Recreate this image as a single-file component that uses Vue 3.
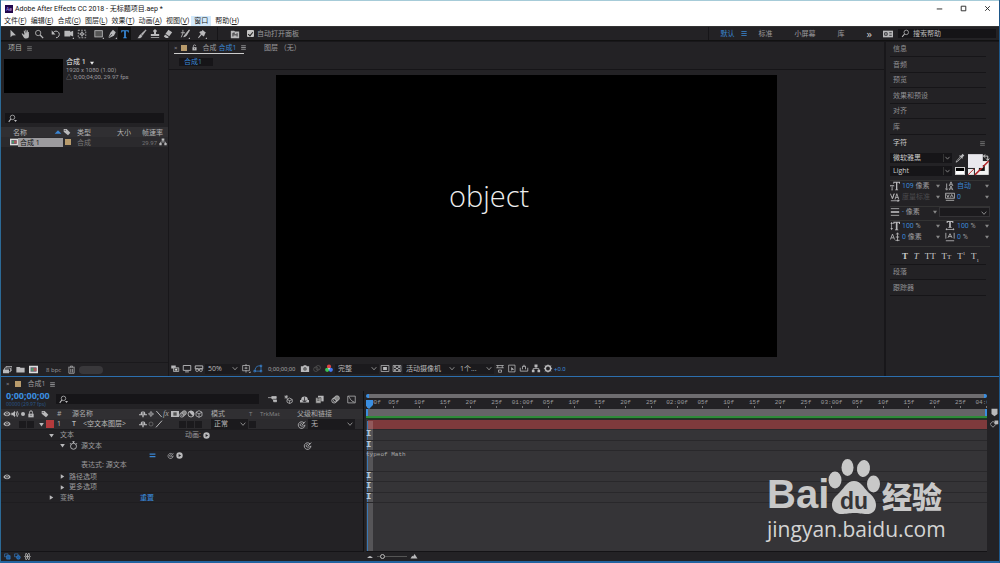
<script setup>
import { h } from 'vue'

const glyphs = {
  arrow: '<path d="M3 1v9l2.400-2.200L9.500 7.600z" fill="currentColor"/>',
  hand: '<path d="M3 6.500 1.500 5l-.8.8L3.200 10c.5 1 1.300 1.500 3 1.500 2.200 0 3.300-1 3.300-3V3.500h-1V6l-.4-4.500h-1L7 5.500 6.200.8h-1L5.500 5.500 4.200 1.700l-1 .3 1 4.500z" fill="currentColor"/>',
  search: '<circle cx="5" cy="4.800" r="3.200" fill="none" stroke="currentColor"/><path d="M7.400 7.200 11 11" stroke="currentColor" stroke-width="1.500"/>',
  find: '<circle cx="7" cy="4.500" r="3" fill="none" stroke="currentColor"/><path d="M4.800 6.700 1.500 10.500" stroke="currentColor" stroke-width="1.400"/>',
  findmenu: '<circle cx="6" cy="4.500" r="3" fill="none" stroke="currentColor"/><path d="M3.800 6.700 1 10.500" stroke="currentColor" stroke-width="1.400"/><path d="M8 8h4l-2 2.500z" fill="currentColor"/>',
  rotate: '<path d="M2.500 4.500a4 4 0 1 1 3.500 6" fill="none" stroke="currentColor" stroke-width="1.200"/><path d="M.8 1.500v5h4.500z" fill="currentColor"/>',
  camera: '<path d="M.5 2h7v1.500L11 2v7L7.500 7.500V9h-7z" fill="currentColor"/><path d="M12 12v-2l-2 2z" fill="currentColor"/>',
  pan: '<rect x="1.500" y="1.500" width="9" height="9" fill="none" stroke="currentColor" stroke-dasharray="2 1.500"/><circle cx="6" cy="6" r="1.800" fill="none" stroke="currentColor"/><path d="M6 2v8M2 6h8" stroke="currentColor" stroke-width=".7"/>',
  rect: '<rect x="1" y="2" width="9" height="7.500" fill="#555" stroke="currentColor"/><path d="M12 12v-2l-2 2z" fill="currentColor"/>',
  pen: '<path d="M7.200.8 10.500 4 8.300 8 2.500 10.800 1.800 10 4 4.500z" fill="currentColor"/><path d="M2 10.500 6 6" stroke="#232225" stroke-width=".8"/><path d="M12 12v-2l-2 2z" fill="currentColor"/>',
  type: '<path d="M1.500 1.500h9v2.700h-.8L9 2.800H7v7l1.200.4v.8H3.800v-.8L5 9.800v-7H3l-.7 1.400h-.8z" fill="currentColor"/>',
  brush: '<path d="M10.500 1 11 1.500 6.500 7.500 5 6zM4.500 6.500 6 8c0 2-2 3-5 2.800C3 10 2.500 7 4.500 6.500z" fill="currentColor" stroke="currentColor" stroke-width=".6"/>',
  stamp: '<path d="M4.800 6V4a2 2 0 1 1 2.400 0v2H11v2.500H1V6zM1 9.500h10v1H1z" fill="currentColor"/>',
  eraser: '<path d="M6.500 1 11 4 7.500 8.800 3 5.800zM2.500 6.500 7 9.500l-1 1.300H3.500L1 9z" fill="currentColor"/>',
  roto: '<path d="m11 1-5 6-1.500 2.500L7.500 8 11.500 1.500zM3.500 1v4M1 4.500h5M3.500 5 1.500 10" stroke="currentColor" fill="currentColor"/><path d="M12 12v-2l-2 2z" fill="currentColor"/>',
  pin: '<path d="m6.500.8 4.500 4-1.200.4-1 3L7.500 9 5.800 7 2 11l-.7-.7L4.500 6 2.800 4.300l.8-1.200 2.500-.8z" fill="currentColor"/><path d="M12 12v-2l-2 2z" fill="currentColor"/>',
  panel: '<path d="M1 2h4l1 1h5v8H1z" fill="currentColor"/><path d="M3.500 5v4M8.500 5v4M3.500 5H6M4 7h4" stroke="#232225"/>',
  menu: '<path d="M2 3h8M2 6h8M2 9h8" stroke="currentColor" stroke-width="1.200"/>',
  cc: '<path d="M0 2h12v8H0z" fill="currentColor"/><path d="M2 4.500h3v3H2zM7.500 4.500h3M7.500 7.500h3" stroke="#232225" fill="none"/>',
  lockopen: '<path d="M2.500 5.500h7V11h-7z" fill="currentColor"/><path d="M4 5.500V3.500a2 2 0 0 1 4 0" stroke="currentColor" stroke-width="1.300" fill="none"/><path d="M6 7v2" stroke="#232225"/>',
  lock: '<path d="M2 5.500h8V11H2z" fill="currentColor"/><path d="M3.800 5.500V3.500a2.200 2.200 0 0 1 4.400 0v2" stroke="currentColor" stroke-width="1.500" fill="none"/><path d="M6 7v2" stroke="#232225"/>',
  down: '<path d="M2 3.500h8l-4 6z" fill="currentColor"/>',
  up: '<path d="M1 8.500h10l-5-5z" fill="currentColor"/>',
  right: '<path d="M3 2v8l6-4z" fill="currentColor"/>',
  chev: '<path d="m2.500 4 3.500 4L9.500 4" fill="none" stroke="currentColor" stroke-width="1.300"/>',
  tag: '<path d="M1 1.500h4.500L11 7 7.500 11 1 5.500z" fill="currentColor"/><circle cx="3.200" cy="3.400" r=".9" fill="#232225"/>',
  comp: '<path d="M0 1h12v10H0z" fill="#ddd"/><path d="M2 3h8v6H2z" fill="#667"/><circle cx="5" cy="6" r="2" fill="#48a06a"/><path d="M6 4h4v4H6z" fill="#a8585c"/>',
  net: '<path d="M4 .8h4v3.500H4zM.5 7.500H4V11H.5zM8 7.500h3.500V11H8z" fill="currentColor"/><path d="M6 4v2M2.300 8V6h7.400v2" stroke="currentColor" fill="none"/>',
  footage: '<path d="M4 2h8v5H4z" fill="none" stroke="currentColor"/><path d="M2 4h8v5H2z" fill="#232225" stroke="currentColor"/><path d="M0 6h8v5H0z" fill="currentColor"/>',
  folder: '<path d="M.5 2.500H5l1 1.200h5.500V10H.5z" fill="currentColor"/>',
  trash: '<path d="M1.500 3h9M4.500 3V1.500h3V3M2.500 4v7h7V4M5 5v5M7.200 5v5" fill="none" stroke="currentColor"/>',
  stack: '<path d="M1 2h6v4H1z" fill="currentColor"/><path d="M4 5h7v5H4z" fill="#555" stroke="currentColor"/><circle cx="7.500" cy="7.500" r="1.300" fill="#ddd"/>',
  monitor: '<path d="M1 2h10v6.500H1zM3.500 10.500h5" fill="none" stroke="currentColor" stroke-width="1.200"/>',
  goggles: '<path d="M1 2.500h10v4H1z" fill="none" stroke="currentColor" stroke-width="1.300"/><circle cx="3.500" cy="8" r="2" fill="none" stroke="currentColor"/><circle cx="8.500" cy="8" r="2" fill="none" stroke="currentColor"/>',
  grid: '<path d="M1.500 2h9v7h-9zM6 0v3M6 8v3.500M4 5.500h4M6 4v3" fill="none" stroke="currentColor"/><path d="M12 12V9.500L9.500 12z" fill="currentColor"/>',
  mask: '<path d="M2 9.500c0-4 1.500-6.500 5-7h3v7zM.5 8.500h2v2h-2zM9 1.500h2v2H9zM9 8.500h2v2H9z" fill="none" stroke="currentColor"/>',
  photo: '<path d="M.5 3h3l1-1.500h3l1 1.500h3v7.500H.5z" fill="currentColor"/><circle cx="6" cy="6.500" r="2.200" fill="#333"/><circle cx="6" cy="6.500" r="1" fill="currentColor"/>',
  ghost: '<circle cx="4.500" cy="7" r="3" fill="none" stroke="currentColor"/><circle cx="7.500" cy="5" r="3" fill="none" stroke="currentColor"/>',
  rgb: '<circle cx="6" cy="3.500" r="2.800" fill="#e04444"/><circle cx="3.600" cy="7.800" r="2.800" fill="#3cc455"/><circle cx="8.400" cy="7.800" r="2.800" fill="#4478f0"/><circle cx="6" cy="6.200" r="1" fill="#fff"/>',
  roi: '<path d="M.8 2h10.400v8H.8z" fill="none" stroke="currentColor"/><path d="M3.500 4h5v4h-5z" fill="currentColor"/>',
  checker: '<path d="M.8 2h10.400v8H.8z" fill="none" stroke="currentColor"/><path d="M2 3h2.500v2H2zM7.500 3H10v2H7.500zM4.500 5h3v2h-3zM2 7h2.500v2H2zM7.500 7H10v2H7.500z" fill="currentColor"/>',
  pixel: '<path d="M1 2h10M1 5h10M3 2v3M9 2v3M4 8h4v3H4z" fill="none" stroke="currentColor"/>',
  fast: '<path d="M1.500 1.500h8.500v9H1.500z" fill="none" stroke="currentColor"/><path d="M5 4v5l1.500-1.500L9 7.500z" fill="currentColor"/>',
  share: '<path d="M1 5v4.500h10V5M4 7V3h4v4M6 1v3" fill="none" stroke="currentColor" stroke-width="1.100"/>',
  gear: '<circle cx="6" cy="6" r="3.600" fill="none" stroke="currentColor" stroke-width="2"/><path d="M6 .5v2M6 9.500v2M.5 6h2M9.500 6h2M2 2l1.500 1.500M8.500 8.500 10 10M10 2 8.500 3.500M3.500 8.500 2 10" stroke="currentColor"/>',
  eye: '<path d="M.5 6c3-5 8-5 11 0-3 4.500-8 4.500-11 0z" fill="currentColor"/><circle cx="6" cy="5.800" r="2.600" fill="#232225"/><circle cx="6" cy="5.800" r="1.200" fill="currentColor"/>',
  audio: '<path d="M.5 4H3l3-3v10L3 8H.5z" fill="currentColor"/><path d="M7.500 3q2 3 0 6M9 1.500q4 4.500 0 9" fill="none" stroke="currentColor" stroke-width="1.300"/>',
  dot: '<circle cx="6" cy="6" r="3" fill="currentColor"/>',
  shy: '<path d="M2.500 6a3.500 4 0 0 1 7 0v1h-7zM0 6.500h12v1.500H0zM5 8h2v3H5z" fill="currentColor"/><path d="M6 2v5" stroke="#232225"/>',
  star: '<path d="M6 2v8M2 6h8" stroke="currentColor"/><path d="m6 2.500 3.500 3.500L6 9.500 2.500 6z" fill="none" stroke="currentColor"/>',
  stardim: '<circle cx="6" cy="6" r="3" fill="none" stroke="#777"/>',
  back: '<path d="m2 1.500 8 9" stroke="currentColor" stroke-width="1.500"/>',
  slash: '<path d="M10.500 1 1.500 11" stroke="currentColor" stroke-width="1.500"/>',
  film: '<path d="M0 1.500h12v9H0z" fill="currentColor"/><path d="M3.500 3.500h5v5h-5z" fill="#555"/>',
  blur: '<circle cx="4.200" cy="7.500" r="3.200" fill="none" stroke="currentColor" stroke-width="1.200"/><circle cx="6" cy="6" r="3.200" fill="none" stroke="currentColor"/><circle cx="8" cy="4.200" r="3.200" fill="#888" stroke="currentColor"/>',
  adjust: '<circle cx="6" cy="6" r="4.500" fill="none" stroke="currentColor" stroke-width="1.300"/><path d="M2.800 2.800a4.500 4.500 0 1 1 6.400 6.400z" fill="currentColor"/>',
  cube: '<path d="m6 1 4.500 2.300v5.400L6 11 1.500 8.700V3.300zM1.500 3.300 6 5.800l4.500-2.500M6 5.800V11" fill="none" stroke="currentColor" stroke-width="1.200"/>',
  whip: '<path d="M9.500 4A4.400 4.400 0 1 0 10.500 6.500C10 8.500 4 9 4.200 6.300 4.500 4 8 4.500 7.300 6.300L11 2" fill="none" stroke="currentColor" stroke-width="1.100"/>',
  play: '<circle cx="6" cy="6" r="5.500" fill="currentColor"/><path d="M4.500 3.500v5L8.800 6z" fill="#232225"/>',
  watch: '<circle cx="6" cy="7" r="4" fill="none" stroke="currentColor" stroke-width="1.200"/><path d="M4.500 1h3M6 1v2M1.500 3 3 4.500M10.500 3 9 4.500" stroke="currentColor" stroke-width="1.300"/>',
  equal: '<path d="M1 3.500h10M1 8h10" stroke="currentColor" stroke-width="2"/>',
  flow: '<path d="M0 3.500h5M5 2h6v2.500H5zM5 3.500 8 8M7.500 6.500h4V9h-4z" fill="currentColor" stroke="currentColor"/>',
  draft: '<path d="M3 0v5M.5 2.500h5M1 1l4 3.500M5 1 1 4.500" stroke="currentColor"/><path d="m7.500 4 3.500 2v3.500l-3.500 2-3.500-2V6zM4 6l3.500 1.500L11 6M7.500 7.500v4" fill="none" stroke="currentColor"/>',
  shytop: '<path d="M1.500 6.500a4.500 4.500 0 0 1 9 0H12V10H0V6.500z" fill="currentColor"/><path d="M4 6.500v2h4v-2M6 3v6" stroke="#232225" fill="none"/>',
  blend: '<path d="M4 1h7.500v7.500H4z" fill="currentColor"/><path d="M1 3.500h7V11H1z" fill="#aaa" stroke="#232225" stroke-width=".7"/><path d="M3 5h3M3 7h3" stroke="#333"/>',
  graph: '<path d="M1 1.500h10v9H1z" fill="none" stroke="currentColor"/><path d="M2 2c2 1 2 6 8 7.500" fill="none" stroke="currentColor"/>',
  marker: '<path d="M2 1h8v7l-4 3-4-3z" fill="currentColor"/>',
  keys: '<path d="m4 3 4 4-4 4-4-4z" fill="none" stroke="currentColor"/><path d="M6 2h5v5H6z" fill="currentColor"/>',
  small: '<path d="M1 8.500 4 6l2-1 2 1 3 2.500z" fill="currentColor"/>',
  large: '<path d="m0 9.500 3-5L4.500 6 7 1.500l5 8z" fill="currentColor"/>',
  toggle: '<path d="M1 1.500h6v5H1z" fill="none" stroke="currentColor"/><path d="M4.500 4.500h6v6h-6z" fill="#1f5d9e" stroke="currentColor"/>',
  toggleround: '<path d="M1 1.500h6v5H1z" fill="none" stroke="currentColor"/><circle cx="7.500" cy="7.500" r="3.200" fill="#1f5d9e" stroke="currentColor"/>',
  braces: '<path d="M5 1H3v4L1 6l2 1v4h2M7 1h2v4l2 1-2 1v4H7M6 2v8M3.500 6h5" fill="none" stroke="currentColor" stroke-width="1.500"/>',
  dropper: '<path d="m7 3.500 2-2.500 2.200 2L9 5.200l.5.8-1 1L5 3.500l1-1z" fill="currentColor"/><path d="M6 5 2 9.500l-.7 1.500L3 10.200 7.200 6.200" fill="none" stroke="currentColor"/>',
  size: '<path d="M4 1h8v2.200h-.8L10.800 2H8.800v8l1 .5v.5H6.200v-.5l1-.5V2h-2l-.4 1.200H4zM0 5h5v1.500h-.6L4 6H3v4.500h.5v.5h-2v-.5H2V6H1l-.4.5H0z" fill="currentColor"/>',
  lead: '<path d="m5 6 2.200-5L9.500 6M6 4.500h2.500M5 11l2.200-5L9.500 11M6 9.500h2.500M2 3v7M.5 9 2 11 3.500 9" fill="none" stroke="currentColor"/>',
  kern: '<path d="m.5 2 2.300 6L5 2 3 8M6 9l2.200-7L10.500 9M7 6.500h3M1 10.500h9" fill="none" stroke="currentColor"/><path d="M9 9l3 1.500L9 12z" fill="currentColor"/>',
  track: '<path d="M.5 1.500h11v6H.5zM2 3l1.500 3.500L5 3M6.500 6.500 8 3l2 3.500M1 10h10" fill="none" stroke="currentColor"/>',
  lines: '<path d="M1 2h10M1 10h10" stroke="currentColor"/><path d="M1 6h10" stroke="currentColor" stroke-width="2"/>',
  vscale: '<path d="M4 1h8v2.500h-1L10.500 2.200H9V10l1 .5v.5H6v-.5l1-.5V2.200H5.500L5 3.500H4zM2 1l1.500 2.500H.5zM2 11 .5 8.500h3zM1.600 3h.8v6h-.8z" fill="currentColor"/>',
  hscale: '<path d="M2 0h8v2.500H9L8.500 1.300H7V7l1 .5V8H4v-.5L5 7V1.300H3.500L3 2.500H2zM.5 10l2-1.500v1h7v-1l2 1.500-2 1.500v-1h-7v1z" fill="currentColor"/>',
  base: '<path d="M.5 9 3 2.500 5.500 9M1.500 7h3M9 1v10M7.500 3 9 1l1.500 2M6.500 10h5M7 6h4" fill="none" stroke="currentColor"/>',
  tsume: '<path d="m3.500 7 2.500-5L8.500 7M4.500 5.500h3M1 1v7M11 1v7M1 10.500h10" fill="none" stroke="currentColor"/>'
}
const Ico = ({ name }) => h('svg', { viewBox: '0 0 12 12', class: 'ico', 'aria-hidden': 'true', innerHTML: glyphs[name] })
Ico.props = ['name']

const menus = [['文件', 'F'], ['编辑', 'E'], ['合成', 'C'], ['图层', 'L'], ['效果', 'T'], ['动画', 'A'], ['视图', 'V'], ['窗口', ''], ['帮助', 'H']]
const tools = [['arrow', 'hand', 'search'], ['rotate', 'camera', 'pan'], ['rect', 'pen', 'type'], ['brush', 'stamp', 'eraser'], ['roto'], ['pin']]
const closed = ['信息', '音频', '预览', '效果和预设', '对齐', '库']
const ticks = ['00f']
for (let i = 1; i < 25; i++) ticks.push(i % 6 ? String((i % 6) * 5).padStart(2, '0') + 'f' : '0' + i / 6 + ':00f')
const switches = ['shy', 'star', 'back', 'fx', 'film', 'blur', 'adjust', 'cube']
</script>

<template>
  <div class="app">
    <header class="title">
      <span class="logo">Ae</span>
      <span class="name">Adobe After Effects CC 2018 - 无标题项目.aep *</span>
      <button class="win" aria-label="最小化"><svg viewBox="0 0 12 12"><path d="M3 6.500h6" stroke="#222" /></svg></button>
      <button class="win" aria-label="最大化"><svg viewBox="0 0 12 12"><path d="M3.500 3.500h5v5h-5z" fill="none" stroke="#222" /></svg></button>
      <button class="win" aria-label="关闭"><svg viewBox="0 0 12 12"><path d="m3.500 3.500 5 5m0-5-5 5" stroke="#222" /></svg></button>
    </header>
    <nav class="menus">
      <button v-for="m in menus" :key="m[0]" :class="{ hot: !m[1] }">{{ m[0] }}<template v-if="m[1]">(<u>{{ m[1] }}</u>)</template></button>
    </nav>

    <div class="toolbar">
      <div v-for="(g, i) in tools" :key="i" class="tools">
        <button v-for="t in g" :key="t" :class="{ on: t === 'type' }" :aria-label="t"><Ico :name="t" /></button>
      </div>
      <span class="rule"></span>
      <Ico name="panel" class="mid" />
      <label class="auto"><input type="checkbox" checked />自动打开面板</label>
      <span class="grow"></span>
      <div class="spaces">
        <button class="on">默认<Ico name="menu" /></button>
        <button>标准</button>
        <button class="wide">小屏幕</button>
        <button>库</button>
        <button class="more">»</button>
      </div>
      <Ico name="cc" class="mid" />
      <label class="help"><Ico name="find" /><input type="text" placeholder="搜索帮助" aria-label="搜索帮助" /></label>
    </div>

    <main class="main">
      <section class="project">
        <h2>项目<Ico name="menu" /></h2>
        <div class="info">
          <div class="thumb"></div>
          <div>
            <b>合成 1 <Ico name="down" /></b>
            <p>1920 x 1080 (1.00)</p>
            <p>△ 0;00;04;00, 29.97 fps</p>
          </div>
        </div>
        <label class="find pfind"><Ico name="findmenu" /><input type="text" aria-label="搜索项目" /></label>
        <table>
          <thead>
            <tr><th class="c1"><span>名称<Ico name="up" /></span></th><th class="c2"><Ico name="tag" /></th><th class="c3">类型</th><th class="c4">大小</th><th>帧速率</th></tr>
          </thead>
          <tbody>
            <tr><td><span class="item"><Ico name="comp" /><i>合成 1</i></span></td><td><span class="chip"></span></td><td>合成</td><td></td><td><span class="rate">29.97<Ico name="net" /></span></td></tr>
          </tbody>
        </table>
        <footer>
          <Ico name="footage" /><Ico name="folder" /><Ico name="comp" />
          <button>8 bpc</button><Ico name="trash" /><span class="pill"></span>
        </footer>
      </section>

      <section class="viewer">
        <div class="tabs">
          <button class="tab on"><em>×</em><span class="chip"></span><Ico name="lockopen" />合成 <strong>合成1</strong><Ico name="menu" /></button>
          <button class="tab">图层 （无）</button>
        </div>
        <div class="crumb"><button>合成1</button></div>
        <div class="stage"><div class="canvas"><span>object</span></div></div>
        <footer>
          <Ico name="stack" /><Ico name="monitor" /><Ico name="goggles" />
          <span class="sel s1"><select aria-label="放大率"><option>50%</option></select><Ico name="chev" /></span>
          <Ico name="grid" /><Ico name="mask" class="blue" />
          <button class="time">0;00;00;00</button>
          <Ico name="photo" /><Ico name="ghost" class="dim" /><Ico name="rgb" />
          <span class="sel s2"><select aria-label="分辨率"><option>完整</option></select><Ico name="chev" /></span>
          <Ico name="roi" /><Ico name="checker" />
          <span class="sel s3"><select aria-label="视图"><option>活动摄像机</option></select><Ico name="chev" /></span>
          <span class="sel s4"><select aria-label="视图布局"><option>1个...</option></select><Ico name="chev" /></span>
          <Ico name="pixel" /><Ico name="fast" /><Ico name="share" /><Ico name="net" /><Ico name="gear" />
          <button class="blue expo">+0.0</button>
        </footer>
      </section>

      <aside class="side">
        <button v-for="p in closed" :key="p" class="fold">{{ p }}</button>
        <h2>字符<Ico name="menu" /></h2>
        <div class="fonts">
          <div class="faces">
            <span class="sel"><select aria-label="字体"><option>微软雅黑</option></select><Ico name="chev" /></span>
            <span class="sel"><select aria-label="字体样式"><option>Light</option></select><Ico name="chev" /></span>
          </div>
          <div class="pick"><Ico name="dropper" /><span class="bw"></span></div>
          <svg class="swatch" viewBox="0 0 22 24">
            <path d="M7 8h14v14H7z" fill="#f2f2f2" /><path d="M11 12h6v6h-6z" fill="#111" /><path d="m7 22 14-14" stroke="#b3282d" stroke-width="1.500" />
            <path d="M0 1h15v14H0z" fill="#e9e8ed" /><path d="M0 16h6v6H0z" fill="#eee" /><path d="m0 22 6-6" stroke="#b3282d" />
            <path d="M16 3h4v4M18.500 5.500 20 7.500l1.500-2M17.500 1.500 15.500 3l2 1.500" fill="none" stroke="#ccc" />
          </svg>
        </div>
        <div class="nums">
          <Ico name="size" /><p><button>109</button> 像素</p><Ico name="down" class="dd" /><Ico name="lead" /><p><button>自动</button></p><Ico name="down" class="dd" />
          <Ico name="kern" /><p class="off">度量标准</p><Ico name="down" class="dd" /><Ico name="track" /><p><button>0</button></p><Ico name="down" class="dd" />
        </div>
        <div class="nums one">
          <Ico name="lines" /><p><button>-</button> 像素</p><Ico name="down" class="dd" />
          <span class="sel box"><select aria-label="描边顺序"><option></option></select><Ico name="chev" /></span>
        </div>
        <div class="nums">
          <Ico name="vscale" /><p><button>100</button> %</p><Ico name="down" class="dd" /><Ico name="hscale" /><p><button>100</button> %</p><Ico name="down" class="dd" />
          <Ico name="base" /><p><button>0</button> 像素</p><Ico name="down" class="dd" /><Ico name="tsume" /><p><button>0</button> %</p><Ico name="down" class="dd" />
        </div>
        <div class="styles">
          <button><b>T</b></button><button><i>T</i></button><button>TT</button><button>T<small>T</small></button><button>T<sup>1</sup></button><button>T<sub>1</sub></button>
        </div>
        <button class="fold">段落</button>
        <button class="fold">跟踪器</button>
      </aside>
    </main>

    <section class="timeline">
      <div class="ttab"><em>×</em><span class="chip"></span>合成1<Ico name="menu" /></div>
      <div class="left">
        <div class="ctrl">
          <div class="clock"><button>0;00;00;00</button><small>00000 (29.97 fps)</small></div>
          <label class="find"><Ico name="findmenu" /><input type="text" aria-label="搜索图层" /></label>
          <div class="modes"><Ico name="flow" /><Ico name="draft" /><Ico name="shytop" /><Ico name="blend" /><Ico name="blur" /><Ico name="graph" /></div>
        </div>
        <div class="row head">
          <Ico name="eye" /><Ico name="audio" /><Ico name="dot" /><Ico name="lock" />
          <Ico name="tag" class="ctr" /><span class="num">#</span><span>源名称</span>
          <span class="sw"><template v-for="s in switches" :key="s"><i v-if="s === 'fx'">fx</i><Ico v-else :name="s" /></template></span>
          <span class="md">模式</span><span class="trk">T</span><span class="trk">TrkMat</span><span>父级和链接</span>
        </div>
        <div class="row layer">
          <Ico name="eye" /><span></span><i class="cell"></i><i class="cell"></i>
          <span class="lab"><Ico name="down" /><i class="red"></i></span><span class="num">1</span>
          <span class="lname"><b>T</b>&lt;空文本图层&gt;</span>
          <span class="sw"><Ico name="shy" /><Ico name="stardim" /><Ico name="slash" /><i></i><i></i><i class="cell"></i><i class="cell"></i><i class="cell"></i></span>
          <span class="sel md"><select aria-label="模式"><option>正常</option></select><Ico name="chev" /></span>
          <i class="cell"></i><span></span>
          <span class="parent"><Ico name="whip" /><span class="sel"><select aria-label="父级"><option>无</option></select><Ico name="chev" /></span></span>
        </div>
        <div class="prop p1"><span class="pn"><Ico name="down" />文本</span><span class="anim">动画: <Ico name="play" /></span></div>
        <div class="prop p2"><span class="pn"><Ico name="down" /><Ico name="watch" class="w" />源文本</span><Ico name="whip" class="pw" /></div>
        <div class="prop expr"><span class="ops"><Ico name="equal" class="blue" /><Ico name="whip" /><Ico name="play" /></span><span class="et">表达式: 源文本</span></div>
        <div class="prop p2"><Ico name="eye" class="ev" /><span class="pn"><Ico name="right" />路径选项</span></div>
        <div class="prop p2"><span class="pn"><Ico name="right" />更多选项</span></div>
        <div class="prop p1"><span class="pn"><Ico name="right" />变换</span><button class="reset">重置</button></div>
      </div>
      <div class="tracks">
        <div class="nav"></div>
        <div class="ruler"><span v-for="(t, i) in ticks" :key="i">{{ t }}</span></div>
        <div class="work"></div>
        <div class="cache"></div>
        <div class="bar"></div>
        <div class="lane"><b>I</b></div>
        <div class="lane"><b>I</b></div>
        <div class="lane tall"><code>typeof Math</code></div>
        <div class="lane"><b>I</b></div>
        <div class="lane"><b>I</b></div>
        <div class="lane"><b>I</b></div>
        <div class="playhead"><svg viewBox="0 0 8 10"><path d="M0 0h8v5L4 9 0 5z" fill="#3a8ee0" /></svg></div>
      </div>
      <div class="edge"><Ico name="marker" /><Ico name="keys" /></div>
      <div class="tfoot blue"><Ico name="toggle" /><Ico name="toggleround" /><Ico name="braces" class="lit" /></div>
      <div class="zoom"><Ico name="small" /><input type="range" min="0" max="100" value="12" aria-label="缩放时间" /><Ico name="large" /></div>
    </section>

    <div class="mark">
      <div class="brand">
        <span>Bai</span>
        <svg viewBox="0 0 54 58">
          <g fill="#c8c8c8"><ellipse cx="8" cy="22" rx="6.500" ry="8.500" /><ellipse cx="20.500" cy="9.500" rx="6" ry="8.500" /><ellipse cx="36.500" cy="10.500" rx="6.500" ry="8.500" transform="rotate(8 36.500 10.500)" /><ellipse cx="46.500" cy="26" rx="6.500" ry="8.500" />
            <path d="M27 23c7 0 9 6 14 11 5 4 8 8 8 13 0 6-4 9-9 9-6 0-8-1-13-1s-7 1-13 1c-5 0-9-4-9-9 0-6 4-9 8-13 5-5 7-11 14-11z" /></g>
          <text x="27" y="51" text-anchor="middle" class="du">du</text>
        </svg>
        <span class="cn">经验</span>
      </div>
      <div class="url">jingyan.baidu.com</div>
    </div>
  </div>
</template>

<style>
body { background: #232225; }
</style>

<style scoped>
* { box-sizing: border-box; margin: 0; }
.app { position: relative; display: grid; grid-template-rows: 16px 10px 15px 1fr minmax(187px, auto); min-height: 100vh; overflow: hidden; background: #18171a; color: #9c9b9e; font: 7px/10px "Open Sans", "Noto Sans CJK SC", sans-serif; border-left: 1px solid #2c6a96; border-right: 1px solid #1d5688; }
button, input, select { font: inherit; color: inherit; background: none; border: 0; padding: 0; min-width: 0; white-space: nowrap; outline: 0; }
button { text-align: left; }
.ico { width: 9px; height: 9px; flex: none; color: #b9b9bb; }
.blue, .blue .ico, .ico.blue { color: #3a86d4; }
em { font-style: normal; font-size: 6px; }
.chip { display: inline-block; width: 6px; height: 6px; background: #b89b6c; flex: none; }
h2 { font-size: 7px; font-weight: 400; display: flex; align-items: center; color: #aaa; }

.title { display: flex; align-items: center; background: #fff; color: #111; border-top: 1px solid #a6cbd8; padding-left: 4px; font-family: Roboto, "Noto Sans CJK SC", sans-serif; }
.logo { width: 8px; height: 8px; background: #21074c; color: #b49be8; font-size: 5px; line-height: 8px; text-align: center; margin-right: 2px; }
.name { flex: 1; }
.win { width: 24px; height: 14px; display: grid; place-items: center; }
.win svg { width: 11px; height: 11px; }
.menus { display: flex; background: #fff; color: #222; padding-left: 1px; gap: 2px; font-family: Roboto, "Noto Sans CJK SC", sans-serif; }
.menus button { padding: 0 0 0 2px; line-height: 9px; height: 10px; }
.menus .hot { background: #d3e9fb; padding: 0 3px; }
.menus u { text-underline-offset: 1px; }

.toolbar { display: flex; align-items: center; background: #232225; padding-left: 5px; gap: 4px; border-bottom: 1px solid #111; border-top: 1px solid #333; }
.tools { display: flex; }
.tools button { width: 13px; height: 13px; display: grid; place-items: center; }
.tools .ico { width: 10px; height: 10px; }
.tools .on { background: #111; }
.tools .on .ico { color: #3a8ee0; }
.rule { width: 1px; align-self: stretch; background: #161518; margin: 0 4px 0 5px; }
.mid { width: 10px; height: 10px; }
.toolbar > .rule + .mid { margin-left: 4px; }
.auto { display: flex; align-items: center; gap: 3px; margin-left: 3px; }
.auto input { appearance: none; width: 7px; height: 7px; background: #c4c4c4; border-radius: 1px; display: grid; place-items: center; }
.auto input::after { content: ""; width: 2px; height: 4px; border: solid #222; border-width: 0 1px 1px 0; transform: rotate(40deg); }
.grow { flex: 1; }
.spaces { display: flex; align-items: center; border-left: 1px solid #161518; padding-left: 12px; gap: 22px; align-self: stretch; margin-right: 5px; }
.spaces .on { color: #3a86d4; display: flex; align-items: center; gap: 5px; margin-right: -11px; }
.spaces .on .ico { color: #3a86d4; width: 8px; }
.spaces .more { font-size: 11px; color: #ccc; margin-right: 2px; }
.help { width: 98px; height: 9px; background: #151417; margin: 0 3px 0 1px; display: flex; align-items: center; gap: 3px; padding-left: 3px; color: #ccc; }
.help input { width: 76px; height: 9px; }
input::placeholder { color: #bbb; }

.main { display: grid; grid-template-columns: 167px 1fr 114px; column-gap: 1px; padding-top: 1px; min-height: 0; }
.project, .viewer, .side { background: #232225; display: flex; flex-direction: column; min-width: 0; }
.project h2 { padding: 0 7px 2px; gap: 4px; height: 14px; }
h2 .ico { width: 7px; height: 7px; color: #888; }
.info { display: flex; gap: 3px; padding: 3px 3px 0; height: 57px; font: 6px/7px Roboto, "Noto Sans CJK SC", "DejaVu Sans", sans-serif; }
.thumb { width: 59px; height: 34px; background: #000; }
.info b { font-size: 7px; font-weight: 500; color: #ccc; display: flex; align-items: center; gap: 3px; }
.info b .ico { width: 6px; height: 6px; color: #eee; }
.find { background: #161518; display: flex; align-items: center; height: 10px; padding-left: 3px; }
.find input { flex: 1; height: 9px; }
.pfind { margin: 0 4px 4px; flex: none; }
table { border-collapse: collapse; width: 100%; table-layout: fixed; font-size: 7px; line-height: 9px; }
th { background: #302f32; font-weight: 400; color: #b5b5b5; text-align: left; padding: 0; height: 10px; }
td { padding: 0; height: 10px; background: #2b2a2d; color: #777; }
.c1 { width: 62px; } .c2 { width: 14px; } .c3 { width: 40px; } .c4 { width: 25px; }
th span { display: flex; justify-content: space-between; padding: 0 1px 0 12px; align-items: center; }
th .ico { width: 8px; height: 8px; display: block; }
th span .ico { color: #3a86d4; }
.item { display: flex; align-items: center; padding-left: 9px; }
.item i { flex: 1; background: #9c9b9e; color: #111; font-style: normal; padding-left: 2px; }
td .chip { display: block; margin-left: 2px; }
.rate { display: flex; gap: 2px; align-items: center; font: 6px/9px Roboto, sans-serif; }
td .ico { width: 8px; height: 8px; }
.project footer { margin-top: auto; height: 14px; display: flex; align-items: center; gap: 4px; padding-left: 2px; border-top: 1px solid #1a191c; font-size: 6px; }
.project footer button { width: 21px; padding-left: 4px; }
.pill { width: 24px; height: 8px; border-radius: 4px; background: #39383b; margin-left: -1px; }

.tabs { display: flex; gap: 20px; padding-left: 5px; height: 12px; }
.tab { display: flex; align-items: center; gap: 3px; }
.tab.on { border-bottom: 1px solid #ccc; width: 70px; gap: 4px; }
.tab .ico { width: 7px; height: 7px; }
.tab strong { font-weight: 400; color: #3a86d4; margin-left: -2px; }
.crumb { height: 16px; border-bottom: 1px solid #161518; padding: 4px 0 0 10px; }
.crumb button { display: block; background: #161518; color: #3a86d4; width: 34px; height: 8px; line-height: 8px; padding-left: 5px; }
.stage { flex: 1; display: grid; justify-items: center; align-content: start; padding-top: 5px; }
.canvas { position: relative; width: 70%; aspect-ratio: 16 / 9; background: #000; color: #eee; }
.canvas span { position: absolute; left: 34.5%; top: 36%; font: 300 29px/40px "Open Sans", "Noto Sans", sans-serif; }
.viewer footer { height: 15px; display: flex; align-items: center; }
.viewer footer .ico { width: 12px; height: 9px; }
.viewer footer .dim { color: #555; }
.sel { display: grid; align-items: center; background: #1b1a1d; height: 10px; color: #bbb; }
.sel > * { grid-area: 1 / 1; }
.sel select { appearance: none; width: 100%; height: 10px; line-height: 10px; padding: 0 10px 0 3px; }
.sel .ico { justify-self: end; pointer-events: none; width: 8px; height: 8px; color: #999; margin-right: 1px; }
.viewer footer .sel .ico { width: 8px; }
.s1 { width: 35px; } .s2 { width: 44px; } .s3 { width: 54px; } .s4 { width: 37px; }
.time { width: 35px; padding-left: 4px; font: 6px/10px Roboto, sans-serif; }
.expo { font: 6px/10px Roboto, sans-serif; }

.side { padding: 0 13px 0 4px; margin-left: 1px; }
.fold { height: 15px; border-bottom: 1px solid #161518; padding-left: 3px; color: #909093; }
.fold:nth-child(even) { height: 16px; }
.side h2 { height: 16px; padding: 0 0 0 3px; justify-content: space-between; color: #ccc; }
.fonts { display: flex; gap: 3px; height: 30px; padding-top: 2px; margin-right: -4px; border-bottom: 1px solid #333; }
.faces { width: 63px; display: grid; gap: 3px; align-content: start; }
.faces .sel { background: #161518; color: #ccc; }
.faces .sel .ico { border-left: 1px solid #333; }
.pick { width: 10px; display: grid; gap: 4px; align-content: start; }
.pick .ico { width: 10px; height: 10px; }
.bw { height: 8px; background: linear-gradient(#000 50%, #fff 50%); border: 1px solid #ccc; }
.swatch { width: 22px; height: 24px; }
.nums { display: grid; grid-template-columns: 12px 29px 14px 12px 27px 1fr; align-items: center; row-gap: 1px; padding: 0 0 4px; border-bottom: 1px solid #333; margin-right: -4px; }
.nums button { color: #3a86d4; }
.nums p { white-space: nowrap; font-family: Roboto, "Noto Sans CJK SC", sans-serif; }
.nums .off { color: #4b4a4d; }
.nums .ico { width: 10px; height: 10px; }
.nums .dd { width: 6px; height: 6px; justify-self: center; color: #888; }
.nums.one { grid-template-columns: 12px 29px 8px 1fr; padding: 0 0 3px; }
.box { border: 1px solid #343336; }
.nums .box .ico { width: 8px; height: 8px; }
.styles { display: flex; align-items: baseline; justify-content: space-between; height: 18px; padding: 4px 7px 0 12px; font: 9px/10px "Liberation Serif", serif; color: #ccc; border-bottom: 1px solid #161518; }
.styles small { font-size: 7px; }
.styles sup, .styles sub { font-size: 5px; line-height: 0; }

.timeline { display: grid; grid-template-columns: 363px 1fr 12px; grid-template-rows: 14px 1fr 9px; background: #232225; border-top: 1px solid #2c6fae; border-bottom: 2px solid #22639f; }
.ttab { grid-column: 1 / -1; display: flex; align-items: center; gap: 6px; padding-left: 5px; }
.ttab .ico { width: 7px; height: 7px; margin-left: -2px; }
.left { border-right: 1px solid #111; border-bottom: 1px solid #141316; }
.ctrl { display: flex; align-items: start; height: 18px; padding-left: 5px; }
.clock { width: 50px; }
.clock button { display: block; color: #3a8ee0; font: 700 9px/10px "Open Sans", sans-serif; }
.clock small { display: block; font: 5px/7px "Open Sans", sans-serif; color: #2a5a90; white-space: nowrap; }
.ctrl .find { width: 203px; margin-top: 3px; }
.modes { flex: 1; display: flex; justify-content: space-between; padding: 4px 7px 0 9px; }
.modes .ico { width: 9px; height: 9px; }
.row { display: grid; grid-template-columns: 8px 8px 8px 8px 19px 16px 69px 64px 46px 11px 37px 1fr; align-items: center; padding-left: 2px; height: 10px; }
.row > .ico, .sw .ico { width: 8px; height: 8px; }
.row .ctr { justify-self: center; }
.head { background: #302f32; color: #aaa; }
.num { padding-left: 3px; }
.trk { font: 6px/10px "Open Sans", sans-serif; color: #888; }
.row > .num + span { padding-left: 2px; }
.sw { display: grid; grid-template-columns: repeat(8, 8px); align-items: center; }
.sw i { font-family: "Liberation Serif", serif; font-size: 8px; line-height: 8px; }
.md { margin-left: 8px; }
.sel.md { width: 37px; }
.layer { background: #2c2b2e; height: 11px; color: #bbb; border-bottom: 1px solid #1c1b1e; }
.cell { width: 7px; height: 7px; background: #1b1a1d; }
.lab { display: flex; align-items: center; gap: 1px; padding-left: 3px; }
.lab .ico, .pn .ico { width: 7px; height: 7px; }
.red { width: 8px; height: 8px; background: #b33a3c; }
.lname b { display: inline-block; width: 11px; font-weight: 600; }
.parent { display: flex; gap: 2px; align-items: center; }
.parent .sel { width: 47px; }
.prop { position: relative; display: flex; align-items: center; height: 10px; border-bottom: 1px solid #1e1d20; }
.prop:nth-child(even) { height: 11px; }
.pn { display: flex; align-items: center; gap: 5px; width: 137px; }
.p1 .pn { padding-left: 47px; }
.p2 .pn { padding-left: 58px; gap: 3px; width: 302px; }
.p2 .w { width: 9px; height: 9px; }
.anim { padding-left: 47px; display: flex; gap: 2px; align-items: center; }
.anim .ico, .ops .ico { width: 7px; height: 7px; }
.reset { color: #3a8ee0; padding-left: 2px; }
.ev { position: absolute; left: 2px; width: 8px; height: 8px; }
.prop.expr { height: 21px; display: grid; grid-template-rows: 9px 9px; align-content: start; }
.ops { display: flex; padding-left: 148px; gap: 2px; }
.ops .blue { margin-right: 9px; }
.et { padding-left: 80px; }

.tracks { position: relative; overflow: hidden; display: flex; flex-direction: column; background: linear-gradient(#232225 19px, #353437 19px); margin-left: 2px; border-bottom: 1px solid #141316; }
.nav { flex: none; height: 4px; margin-top: 3px; background: #6e6d70; border: solid #3a8ee0; border-width: 0 3px; border-radius: 3px; }
.ruler { display: flex; flex: none; height: 10px; margin: 0 -12px 0 -11px; font: 6px/8px "Liberation Mono", monospace; padding-top: 1px; }
.ruler span { flex: 1 1 0; min-width: 0; display: flex; justify-content: center; white-space: nowrap; background: linear-gradient(#777, #777) center bottom / 1px 2px no-repeat; }
.ruler span:first-child { justify-content: flex-end; }
.work { flex: none; height: 7px; margin-top: 1px; background: #656467; border: solid #3a8ee0; border-width: 0 2px; }
.cache { flex: none; height: 3px; background: #2f8b3a; border-bottom: 1px solid #1b3a20; }
.bar { flex: none; height: 11px; margin-left: 2px; background: #7e3a3c; border: solid #2a292c; border-width: 1px 0; }
.lane { flex: none; position: relative; z-index: 1; height: 10px; border-bottom: 1px solid #29282b; font: 6px/9px "Liberation Mono", monospace; color: #aaa; }
.lane:nth-child(even) { height: 11px; }
.lane b { font-size: 9px; color: #b8c8d8; }
.lane code { font: inherit; display: block; line-height: 8px; }
.lane.tall { height: 21px; }
.playhead { position: absolute; left: 1px; top: 9px; bottom: 0; width: 6px; background: linear-gradient(90deg, #3a78b4 1px, #ffffff2a 1px) 0 21px no-repeat; }
.playhead svg { display: block; width: 8px; height: 10px; margin-left: -2px; }
.edge { padding: 17px 0 0 2px; display: grid; gap: 2px; align-content: start; justify-items: center; }
.tfoot { display: flex; align-items: center; gap: 3px; padding-left: 3px; }
.tfoot .ico { width: 7px; height: 7px; }
.tfoot .lit { color: #bbb; }
.zoom { display: flex; align-items: center; padding-left: 2px; gap: 3px; grid-column: 2 / -1; }
.zoom .ico { width: 8px; height: 7px; }
.zoom input { appearance: none; width: 30px; height: 1px; background: #555; }
.zoom input::-webkit-slider-thumb { appearance: none; width: 5px; height: 5px; border-radius: 50%; border: 1px solid #bbb; background: #232225; }

.mark { position: absolute; z-index: 2; right: 54px; bottom: 20px; width: 178px; color: #c8c8c8; }
.brand { display: flex; height: 57px; }
.brand > span { font: 700 40px/40px "Liberation Sans", sans-serif; padding-top: 16px; width: 60px; }
.brand svg { width: 54px; height: 58px; flex: none; }
.brand .cn { font: 900 30px/30px "Noto Sans CJK SC", sans-serif; padding: 22px 0 0 1px; width: 64px; }
.du { font: 700 23px "Liberation Sans", sans-serif; fill: #353437; }
.url { font: 21px/28px "Open Sans", sans-serif; color: #d4d4d4; white-space: nowrap; }
</style>
